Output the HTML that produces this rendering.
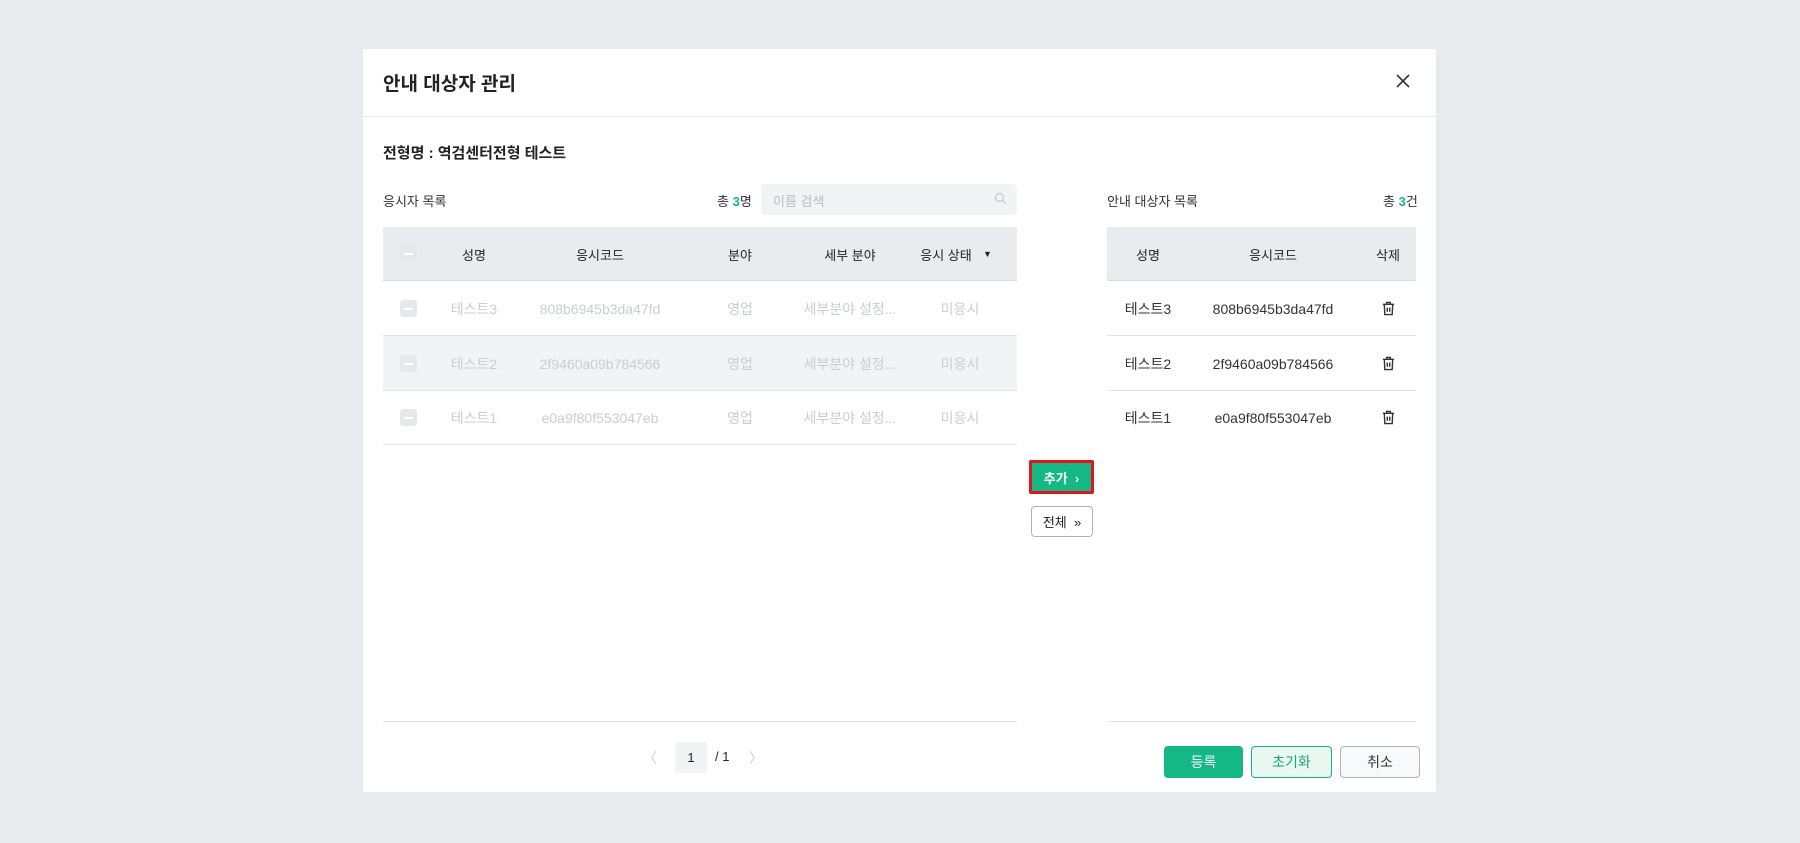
<!DOCTYPE html>
<html><head><meta charset="utf-8"><style>
*{box-sizing:border-box;margin:0;padding:0}
body{width:1800px;height:843px;background:#e8ebee;font-family:"Liberation Sans","Noto Sans CJK KR",sans-serif;position:relative;overflow:hidden;color:#222}
.modal{position:absolute;left:363px;top:49px;width:1073px;height:743px;background:#fff}
.a{position:absolute}
.title{left:20px;top:20px;font-size:19px;font-weight:bold;color:#222}
.hline{left:0;top:67px;width:1073px;height:1px;background:#e3e6ea}
.th{background:#e9ecef;border-bottom:1px solid #d9dde2}
.c{position:absolute;transform:translateX(-50%);white-space:nowrap}
.row{border-bottom:1px solid #dfe2e6}
.mut{color:#c9cdd2;font-size:14px}
.lat{margin-top:2px}
.cb{position:absolute;width:17px;height:17px;background:#e6e8eb;border-radius:3px}
.cb:after{content:"";position:absolute;left:4px;top:8px;width:9px;height:1.5px;background:#fff}
.btn{position:absolute;border-radius:4px;font-size:14px;display:flex;align-items:center;justify-content:center}
</style></head><body>
<div class="modal">
<div class="a title">안내 대상자 관리</div>
<svg class="a" style="left:1032px;top:24px" width="16" height="16" viewBox="0 0 16 16"><path d="M2 2L14 14M14 2L2 14" stroke="#333" stroke-width="1.6"/></svg>
<div class="a hline"></div>
<div class="a" style="left:20px;top:93px;font-size:15px;font-weight:bold">전형명 : 역검센터전형 테스트</div>
<div class="a" style="left:20px;top:142px;font-size:13px;color:#333">응시자 목록</div>
<div class="a" style="left:354px;top:142px;font-size:13px;color:#333">총 <b style="color:#14b885">3</b>명</div>
<div class="a" style="left:398px;top:135px;width:256px;height:31px;background:#f1f3f5;border-radius:4px"></div>
<div class="a" style="left:410px;top:142px;font-size:13px;color:#b8bcc2">이름 검색</div>
<svg class="a" style="left:631px;top:143px" width="13" height="13" viewBox="0 0 13 13"><circle cx="5.5" cy="5.5" r="4" fill="none" stroke="#c4c8cd" stroke-width="1.2"/><path d="M8.5 8.5L12 12" stroke="#c4c8cd" stroke-width="1.2"/></svg>

<div class="a th" style="left:20px;top:178px;width:634px;height:54px">
<div class="cb" style="left:17px;top:18px"></div>
<div class="c" style="left:91px;top:18px;font-size:13px">성명</div>
<div class="c" style="left:217px;top:18px;font-size:13px">응시코드</div>
<div class="c" style="left:357px;top:18px;font-size:13px">분야</div>
<div class="c" style="left:467px;top:18px;font-size:13px">세부 분야</div>
<div class="c" style="left:563px;top:18px;font-size:13px">응시 상태</div>
<div class="a" style="left:600px;top:22px;font-size:9px">▼</div>
</div>
<div class="a row" style="left:20px;top:232px;width:634px;height:55px">
<div class="cb" style="left:17px;top:19px"></div>
<div class="c mut" style="left:91px;top:18px">테스트3</div><div class="c mut lat" style="left:217px;top:18px">808b6945b3da47fd</div><div class="c mut" style="left:357px;top:18px">영업</div><div class="c mut" style="left:467px;top:18px">세부분야 설정...</div><div class="c mut" style="left:577px;top:18px">미응시</div></div>
<div class="a row" style="left:20px;top:287px;width:634px;height:55px;background:#f1f3f5">
<div class="cb" style="left:17px;top:19px"></div>
<div class="c mut" style="left:91px;top:18px">테스트2</div><div class="c mut lat" style="left:217px;top:18px">2f9460a09b784566</div><div class="c mut" style="left:357px;top:18px">영업</div><div class="c mut" style="left:467px;top:18px">세부분야 설정...</div><div class="c mut" style="left:577px;top:18px">미응시</div></div>
<div class="a row" style="left:20px;top:342px;width:634px;height:54px">
<div class="cb" style="left:17px;top:18px"></div>
<div class="c mut" style="left:91px;top:17px">테스트1</div><div class="c mut lat" style="left:217px;top:17px">e0a9f80f553047eb</div><div class="c mut" style="left:357px;top:17px">영업</div><div class="c mut" style="left:467px;top:17px">세부분야 설정...</div><div class="c mut" style="left:577px;top:17px">미응시</div></div>
<div class="a" style="left:20px;top:672px;width:634px;height:1px;background:#dfe2e6"></div>

<div class="a" style="left:280px;top:699px;font-size:14px;color:#ccc">〈</div>
<div class="a" style="left:312px;top:693px;width:32px;height:31px;background:#f1f3f5;border-radius:3px;font-size:13px;text-align:center;line-height:31px">1</div>
<div class="a" style="left:352px;top:700px;font-size:13px">/ 1</div>
<div class="a" style="left:386px;top:699px;font-size:14px;color:#ccc">〉</div>

<div class="btn" style="left:666px;top:411px;width:65px;height:34px;background:#14b885;border:3px solid #e0141e;border-radius:2px;color:#fff;font-weight:bold;font-size:13px">추가 &nbsp;›</div>
<div class="btn" style="left:668px;top:457px;width:62px;height:31px;border:1px solid #aeb3b8;font-size:13px">전체 &nbsp;»</div>

<div class="a" style="left:744px;top:142px;font-size:13px;color:#333">안내 대상자 목록</div>
<div class="a" style="left:1020px;top:142px;font-size:13px;color:#333">총 <b style="color:#14b885">3</b>건</div>
<div class="a th" style="left:744px;top:178px;width:309px;height:54px">
<div class="c" style="left:41px;top:18px;font-size:13px">성명</div>
<div class="c" style="left:166px;top:18px;font-size:13px">응시코드</div>
<div class="c" style="left:281px;top:18px;font-size:13px">삭제</div></div>
<div class="a row" style="left:744px;top:232px;width:309px;height:55px">
<div class="c" style="left:41px;top:18px;font-size:14px;color:#333">테스트3</div><div class="c lat" style="left:166px;top:18px;font-size:14px;color:#333">808b6945b3da47fd</div>
<svg class="a" style="left:275px;top:20px" width="13" height="15" viewBox="0 0 14 16"><path d="M1 3.5H13M5 3.5V1.5H9V3.5M2.5 3.5L3 14.5H11L11.5 3.5M5.7 7V11.5M8.3 7V11.5" fill="none" stroke="#333" stroke-width="1.5"/></svg></div>
<div class="a row" style="left:744px;top:287px;width:309px;height:55px">
<div class="c" style="left:41px;top:18px;font-size:14px;color:#333">테스트2</div><div class="c lat" style="left:166px;top:18px;font-size:14px;color:#333">2f9460a09b784566</div>
<svg class="a" style="left:275px;top:20px" width="13" height="15" viewBox="0 0 14 16"><path d="M1 3.5H13M5 3.5V1.5H9V3.5M2.5 3.5L3 14.5H11L11.5 3.5M5.7 7V11.5M8.3 7V11.5" fill="none" stroke="#333" stroke-width="1.5"/></svg></div>
<div class="a" style="left:744px;top:342px;width:309px;height:54px">
<div class="c" style="left:41px;top:17px;font-size:14px;color:#333">테스트1</div><div class="c lat" style="left:166px;top:17px;font-size:14px;color:#333">e0a9f80f553047eb</div>
<svg class="a" style="left:275px;top:19px" width="13" height="15" viewBox="0 0 14 16"><path d="M1 3.5H13M5 3.5V1.5H9V3.5M2.5 3.5L3 14.5H11L11.5 3.5M5.7 7V11.5M8.3 7V11.5" fill="none" stroke="#333" stroke-width="1.5"/></svg></div>
<div class="a" style="left:744px;top:672px;width:309px;height:1px;background:#dfe2e6"></div>

<div class="btn" style="left:801px;top:697px;width:79px;height:32px;background:#14b885;color:#fff">등록</div>
<div class="btn" style="left:888px;top:697px;width:81px;height:32px;background:#e9f9f1;border:1px solid #14b885;color:#14a877">초기화</div>
<div class="btn" style="left:977px;top:697px;width:80px;height:32px;background:#f8f9fa;border:1px solid #aeb3b8;color:#333">취소</div>
</div>
</body></html>
